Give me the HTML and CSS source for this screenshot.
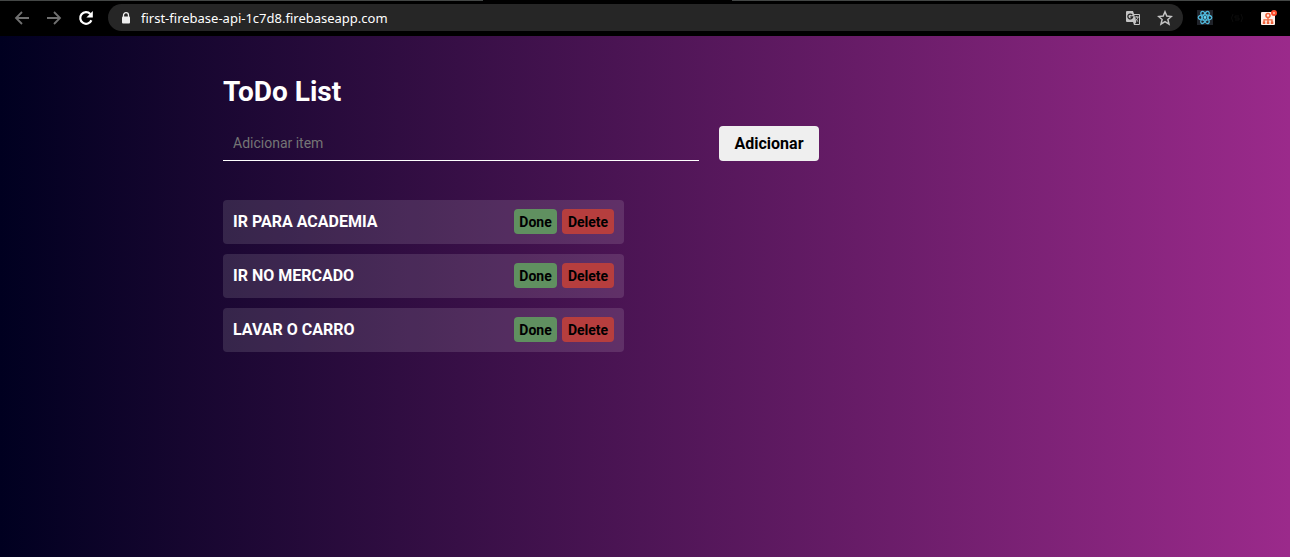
FILE: index.html
```html
<!DOCTYPE html>
<html lang="pt-BR">
<head>
<meta charset="utf-8">
<meta name="viewport" content="width=device-width, initial-scale=1">
<title>ToDo List</title>
<link rel="stylesheet" href="styles.css">
</head>
<body>
<header class="browser">
  <div class="tabs"><span class="tab-before"></span><span class="tab-active"></span><span class="tab-after"></span></div>
  <div class="toolbar">
    <nav class="history">
      <button class="icon-button dim" aria-label="Voltar"><svg viewBox="0 0 16 16" width="16" height="16"><path d="M15 8H2M8 2L2 8l6 6" fill="none" stroke="currentColor" stroke-width="1.8"/></svg></button>
      <button class="icon-button dim" aria-label="Avançar"><svg viewBox="0 0 16 16" width="16" height="16"><path d="M1 8h13M8 2l6 6-6 6" fill="none" stroke="currentColor" stroke-width="1.8"/></svg></button>
      <button class="icon-button" aria-label="Recarregar"><svg viewBox="0 0 16 16" width="16" height="16"><path d="M13.4 10.2A5.8 5.8 0 1 1 12.3 4" fill="none" stroke="currentColor" stroke-width="2.2"/><path d="M14.8 1v6.4H8.4z" fill="currentColor"/></svg></button>
    </nav>
    <div class="address">
      <svg class="lock" viewBox="0 0 10 12" width="10" height="12"><path d="M2.5 5V3.2a2.5 2.5 0 0 1 5 0V5" fill="none" stroke="currentColor" stroke-width="1.3"/><rect x="1" y="4.4" width="8" height="7.2" rx="1" fill="currentColor"/></svg>
      <input class="url" type="text" aria-label="Endereço" value="first-firebase-api-1c7d8.firebaseapp.com">
      <button class="icon-button soft" aria-label="Traduzir"><svg viewBox="0 0 16 16" width="16" height="16"><path d="M2 1h6l1 3h5a1 1 0 0 1 1 1v9a1 1 0 0 1-1 1H9l-1-3H2a1 1 0 0 1-1-1V2a1 1 0 0 1 1-1z" fill="currentColor"/><path d="M9.300 5H14v9h-4l1.300-2z" fill="#262626"/><path d="M7.200 5A2.400 2.400 0 1 0 7.600 7H5.300" fill="none" stroke="#262626" stroke-width="1.300"/><path d="M9.800 7h4M11.800 6v1M13 7c-.5 2-1.500 3-3 4M10.500 8.500c.5 1.200 1.400 2.200 2.700 3" fill="none" stroke="currentColor"/></svg></button>
      <button class="icon-button soft" aria-label="Favoritar"><svg viewBox="0 0 16 16" width="16" height="16"><path d="M8 1.800l1.800 4.300 4.600.4-3.500 3 1.100 4.600-4-2.500-4 2.500 1.100-4.600-3.500-3 4.600-.4z" fill="none" stroke="currentColor" stroke-width="1.500"/></svg></button>
    </div>
    <div class="extensions">
      <button class="icon-button" aria-label="React Developer Tools"><svg viewBox="0 0 16 16" width="16" height="16"><path d="M0 0h16v15H0z" fill="#20232a"/><g fill="none" stroke="#4fb9dc" stroke-width="1.200"><ellipse cx="8" cy="7.500" rx="6.800" ry="2.600"/><ellipse cx="8" cy="7.500" rx="6.800" ry="2.600" transform="rotate(60 8 7.500)"/><ellipse cx="8" cy="7.500" rx="6.800" ry="2.600" transform="rotate(120 8 7.500)"/></g><circle cx="8" cy="7.500" r="1.400" fill="#61dafb"/></svg></button>
      <button class="icon-button faint" aria-label="Extensão"><svg viewBox="0 0 16 16" width="16" height="16"><path d="M4 4Q1 8 4 12M12 4q3 4 0 8M10 6H6v2h4v2H6" fill="none" stroke="currentColor"/></svg></button>
      <button class="icon-button" aria-label="Extensão com aviso"><svg viewBox="0 0 16 16" width="16" height="16"><rect y="2" width="14" height="13" rx="1" fill="#fff0ea"/><circle cx="7" cy="5.500" r="2" fill="none" stroke="#f0643c" stroke-width="1.600"/><path d="M7 8v6M3 12V9.800h8V12" fill="none" stroke="#f0643c" stroke-width="1.300"/><path d="M1.800 11.500h2.500V14H1.800zM5.800 11.500h2.500V14H5.800zM9.800 11.500h2.500V14H9.800z" fill="#f0643c"/><circle cx="13" cy="3" r="3" fill="#ff4b2b"/><circle cx="13" cy="3" r="1.100" fill="#ffc0a8"/></svg></button>
    </div>
  </div>
</header>
<main class="page">
  <div class="container">
    <h1 class="title">ToDo List</h1>
    <form class="add-form">
      <input class="add-input" type="text" placeholder="Adicionar item" aria-label="Adicionar item">
      <button class="add-button" type="button">Adicionar</button>
    </form>
    <ul class="list">
      <li class="item"><span class="name">IR PARA ACADEMIA</span><button class="action done">Done</button><button class="action delete">Delete</button></li>
      <li class="item"><span class="name">IR NO MERCADO</span><button class="action done">Done</button><button class="action delete">Delete</button></li>
      <li class="item"><span class="name">LAVAR O CARRO</span><button class="action done">Done</button><button class="action delete">Delete</button></li>
    </ul>
  </div>
</main>
</body>
</html>
```
FILE: styles.css
```css
* { box-sizing: border-box; margin: 0; padding: 0; }
body {
  display: flex;
  flex-direction: column;
  min-height: 100vh;
  font-family: Roboto, "Liberation Sans", sans-serif;
}
button, input { font: inherit; border: 0; }
button { cursor: pointer; }

.browser { background: #000; color: #fff; }
.tabs { display: flex; height: 1px; }
.tab-before { flex: 483; background: #444746; }
.tab-active { flex: 249; }
.tab-after { flex: 558; background: #444746; }
.toolbar { display: flex; align-items: center; padding: 3px 13px 5px 14px; }
.history { display: flex; gap: 16px; padding-right: 14px; }
.icon-button { display: flex; background: none; color: #fff; }
.dim { color: #707070; }
.soft { color: #c4c4c4; }
.faint { color: #0c0c0c; }
.address {
  flex: 1;
  display: flex;
  align-items: center;
  gap: 16px;
  height: 27px;
  padding: 0 10px 0 13px;
  border-radius: 14px;
  background: #262626;
}
.lock { color: #eee; margin-right: -6px; }
.url {
  flex: 1;
  min-width: 0;
  background: none;
  color: #fff;
  font-family: "Noto Sans", sans-serif;
  font-size: 13px;
  line-height: 20px;
}
.extensions { display: flex; gap: 16px; padding-left: 14px; }

.page {
  flex: 1;
  padding: 38px 20px;
  background: linear-gradient(to right, #000020, #9b2a8b);
}
.container { max-width: 844px; margin: 0 auto; color: #fff; }
.title { font-size: 28px; line-height: 36px; font-weight: 700; }
.add-form { display: flex; gap: 20px; max-width: 596px; margin-top: 16px; }
.add-input {
  flex: 1;
  min-width: 0;
  height: 35px;
  padding: 0 10px;
  border-bottom: 1px solid #fff;
  background: none;
  color: #fff;
  font-size: 14px;
}
.add-input::placeholder { color: #757575; }
.add-button {
  width: 100px;
  border-radius: 4px;
  background: #efefef;
  color: #000;
  font-size: 16px;
  font-weight: 700;
}
.list { display: grid; gap: 10px; max-width: 401px; margin-top: 39px; list-style: none; }
.item {
  display: flex;
  align-items: center;
  gap: 5px;
  padding: 9px 10px 10px;
  border-radius: 4px;
  background: rgba(255, 255, 255, 0.12);
}
.name { flex: 1; font-size: 16px; font-weight: 700; }
.action {
  height: 25px;
  border-radius: 4px;
  color: #000;
  font-size: 14px;
  font-weight: 700;
}
.done { width: 43px; background: #609060; }
.delete { width: 52px; background: #b63e3e; }
```
